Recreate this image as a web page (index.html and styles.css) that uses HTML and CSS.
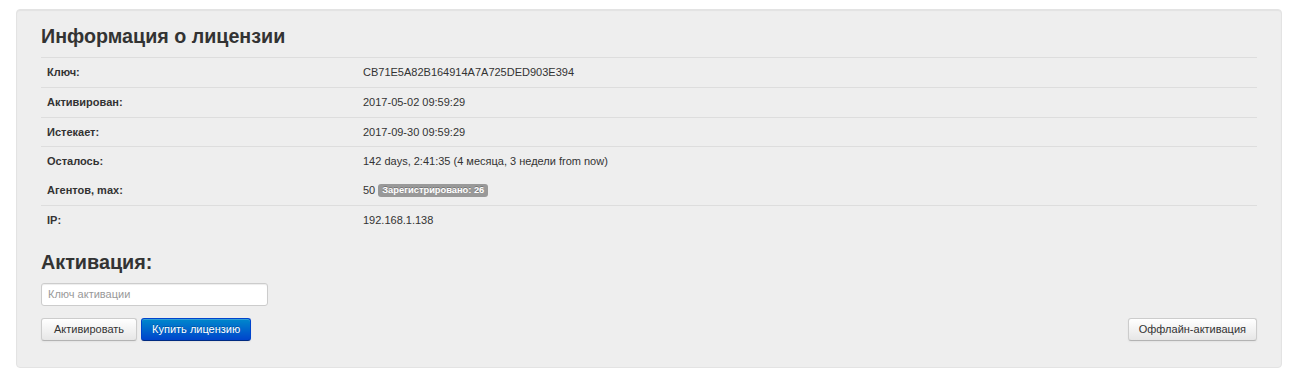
FILE: index.html
```html
<!DOCTYPE html>
<html lang="ru">
<head>
  <meta charset="UTF-8" />
  <meta name="viewport" content="width=device-width, initial-scale=1.0" />
  <title>Лицензия</title>
  <link rel="stylesheet" href="styles.css">
</head>
<body>
  <div class="well">
    <!-- Информация о лицензии -->
    <h3 class="title">Информация о лицензии</h3>
    <table class="license-table">
      <tr>
        <th>Ключ:</th>
        <td>CB71E5A82B164914A7A725DED903E394</td>
      </tr>
      <tr>
        <th>Активирован:</th>
        <td>2017-05-02 09:59:29</td>
      </tr>
      <tr>
        <th>Истекает:</th>
        <td>2017-09-30 09:59:29</td>
      </tr>
      <tr>
        <th>Осталось:</th>
        <td>142 days, 2:41:35 (4 месяца, 3 недели from now)</td>
      </tr>
      <tr class="no-border">
        <th>Агентов, max:</th>
        <td>50 <span class="badge">Зарегистрировано: 26</span></td>
      </tr>
      <tr>
        <th>IP:</th>
        <td>192.168.1.138</td>
      </tr>
    </table>

    <!-- Активация -->
    <h2 class="title title-big">Активация:</h2>
    <input type="text" class="key-input" placeholder="Ключ активации">
    <div class="actions">
      <div class="actions-left">
        <button class="btn btn-wide">Активировать</button>
        <button class="btn btn-primary">Купить лицензию</button>
      </div>
      <button class="btn">Оффлайн-активация</button>
    </div>
  </div>
</body>
</html>
```

FILE: styles.css
```css
* { box-sizing: border-box; }
body {
  margin: 0;
  padding: 9px 9px 0 16px;
  font-family: 'Liberation Sans', Arial, sans-serif;
  font-size: 11px;
  color: #333;
  background: #fff;
}
.well {
  background: #eeeeee;
  border: 1px solid #e3e3e3;
  border-radius: 4px;
  box-shadow: inset 0 1px 1px rgba(0, 0, 0, 0.05);
  padding: 15px 24px 26px;
}
.title {
  margin: 0 0 9px;
  font-size: 19.7px;
  line-height: 23px;
  font-weight: bold;
  color: #333;
}
.title-big {
  margin: 16px 0 9px;
  font-size: 19.8px;
}
/* Таблица */
.license-table {
  width: 100%;
  border-collapse: collapse;
}
.license-table th,
.license-table td {
  padding: 6px;
  line-height: 16.8px;
  text-align: left;
  border-top: 1px solid #dddddd;
  vertical-align: middle;
}
.license-table th {
  width: 316px;
  font-weight: bold;
}
.license-table td { font-weight: normal; }
.license-table tr.no-border th,
.license-table tr.no-border td { border-top: none; }
.badge {
  display: inline-block;
  padding: 1px 4px;
  font-size: 9.3px;
  line-height: 11px;
  font-weight: bold;
  color: #fff;
  background: #999999;
  border-radius: 3px;
  text-shadow: 0 -1px 0 rgba(0, 0, 0, 0.25);
  vertical-align: 1px;
}
/* Форма активации */
.key-input {
  display: block;
  width: 227px;
  height: 23px;
  padding: 3px 6px;
  font-family: inherit;
  font-size: 11px;
  line-height: 15px;
  color: #555;
  background: #fff;
  border: 1px solid #cccccc;
  border-radius: 3px;
  box-shadow: inset 0 1px 1px rgba(0, 0, 0, 0.075);
}
.key-input::placeholder { color: #999; }
.actions {
  display: flex;
  justify-content: space-between;
  margin-top: 12px;
}
.actions-left {
  display: flex;
  gap: 4px;
}
.btn {
  height: 23px;
  padding: 3px 10px;
  font-family: inherit;
  font-size: 11px;
  line-height: 15px;
  color: #333;
  background: linear-gradient(to bottom, #ffffff, #e6e6e6);
  border: 1px solid #cccccc;
  border-bottom-color: #b3b3b3;
  border-radius: 3px;
  box-shadow: inset 0 1px 0 rgba(255, 255, 255, 0.2), 0 1px 2px rgba(0, 0, 0, 0.05);
  cursor: pointer;
}
.btn-wide { padding: 3px 12px; }
.btn-primary {
  color: #fff;
  text-shadow: 0 -1px 0 rgba(0, 0, 0, 0.25);
  background: linear-gradient(to bottom, #0088cc, #0044cc);
  border-color: #0044cc #0044cc #002a80;
}
```
